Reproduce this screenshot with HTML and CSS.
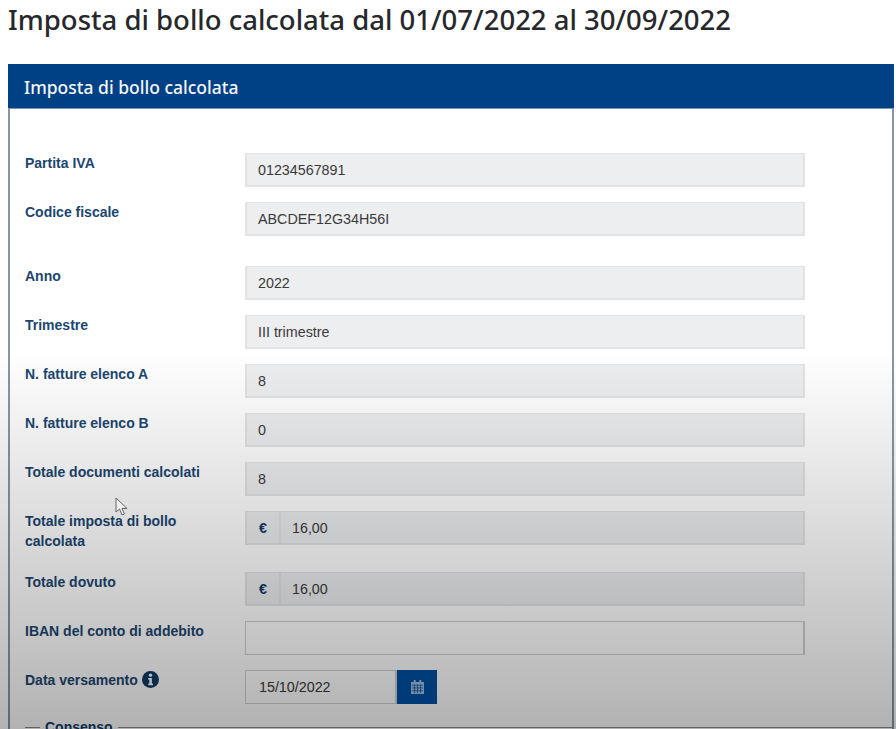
FILE: index.html
```html
<!DOCTYPE html>
<html lang="it">
<head>
    <meta charset="UTF-8">
    <link rel="stylesheet" href="styles.css">
    <title>Imposta di bollo calcolata</title>
</head>
<body>
    <h1 class="page-title">Imposta di bollo calcolata dal 01/07/2022 al 30/09/2022</h1>

    <section class="panel">
        <h2 class="panel-title">Imposta di bollo calcolata</h2>
        <form class="panel-body">
            <div class="row">
                <label class="row-label">Partita IVA</label>
                <div class="field">01234567891</div>
            </div>
            <div class="row row-group-end">
                <label class="row-label">Codice fiscale</label>
                <div class="field">ABCDEF12G34H56I</div>
            </div>
            <div class="row">
                <label class="row-label">Anno</label>
                <div class="field">2022</div>
            </div>
            <div class="row">
                <label class="row-label">Trimestre</label>
                <div class="field">III trimestre</div>
            </div>
            <div class="row">
                <label class="row-label">N. fatture elenco A</label>
                <div class="field">8</div>
            </div>
            <div class="row">
                <label class="row-label">N. fatture elenco B</label>
                <div class="field">0</div>
            </div>
            <div class="row">
                <label class="row-label">Totale documenti calcolati</label>
                <div class="field">8</div>
            </div>
            <div class="row row-tall">
                <label class="row-label">Totale imposta di bollo calcolata</label>
                <div class="field field-money"><span class="addon">€</span><span class="money-value">16,00</span></div>
            </div>
            <div class="row">
                <label class="row-label">Totale dovuto</label>
                <div class="field field-money"><span class="addon">€</span><span class="money-value">16,00</span></div>
            </div>
            <div class="row">
                <label class="row-label">IBAN del conto di addebito</label>
                <div class="field field-empty"></div>
            </div>
            <div class="row">
                <label class="row-label">Data versamento
                    <svg class="info-icon" viewBox="0 0 16 16" width="17" height="17">
                        <circle cx="8" cy="8" r="8" fill="#0f3a66"/>
                        <circle cx="8" cy="3.900" r="1.600" fill="#fff"/>
                        <path d="M5.900 6.600h3.400v5.200h1v1.600H5.900v-1.600h1V8.200h-1z" fill="#fff"/>
                    </svg>
                </label>
                <div class="date-group">
                    <div class="field field-empty date-input">15/10/2022</div>
                    <button type="button" class="date-button">
                        <svg viewBox="0 0 14 15" width="13" height="14">
                            <path d="M3 0h2v2h4V0h2v2h3v13H0V2h3z" fill="#9fc0e2"/>
                            <path d="M1 5.500h12M1 8.500h12M1 11.500h12M3.800 5v9M7 5v9M10.200 5v9" stroke="#0a4f9c" stroke-width="0.800" fill="none"/>
                        </svg>
                    </button>
                </div>
            </div>
            <fieldset class="consent">
                <legend class="consent-title">Consenso</legend>
            </fieldset>
        </form>
    </section>

    <div class="video-shade"></div>
    <svg class="cursor" viewBox="0 0 14 20" width="14" height="20">
        <path d="M1 1v14l3.500-3 2.500 6 2.500-1-2.500-5.500H12z" fill="#fff" fill-opacity="0.5" stroke="#555" stroke-width="0.900"/>
    </svg>
</body>
</html>
```

FILE: styles.css
```css
html, body {
    height: 729px;
    overflow: hidden;
}

body {
    position: relative;
    margin: 0;
    background-color: #fff;
    font-family: "Liberation Sans", Arial, sans-serif;
}

.page-title {
    margin: 0;
    height: 64px;
    padding: 3px 0 0 8px;
    box-sizing: border-box;
    font-family: "Noto Sans", sans-serif;
    font-size: 27.5px;
    line-height: 34px;
    font-weight: 500;
    color: #26282b;
}

.panel {
    margin: 0 2px 0 8px;
    border-left: 2px solid #8597a6;
    border-right: 2px solid #8597a6;
}

.panel-title {
    margin: 0 -2px;
    height: 45px;
    padding-left: 16px;
    box-sizing: border-box;
    background-color: #004085;
    border-bottom: 1px solid #7c98b6;
    font-family: "Noto Sans", sans-serif;
    font-size: 17.5px;
    line-height: 47px;
    font-weight: 500;
    color: #f4f7fa;
}

.panel-body {
    padding: 44px 0 0 15px;
}

.row {
    display: flex;
    margin-bottom: 15px;
}

.row-group-end {
    margin-bottom: 30px;
}

.row-tall {
    height: 46px;
}

.row-label {
    width: 220px;
    flex-shrink: 0;
    padding: 0 30px 0 0;
    box-sizing: border-box;
    font-size: 14px;
    line-height: 20px;
    font-weight: bold;
    color: #1c4670;
}

.field {
    width: 560px;
    height: 34px;
    padding-left: 11px;
    box-sizing: border-box;
    background-color: #edeef0;
    border: 2px solid #e2e3e5;
    border-width: 1px 2px 2px 2px;
    font-size: 14.3px;
    line-height: 32px;
    color: #3a3a3a;
}

.field-empty {
    background-color: transparent;
    border-color: #d0d0d0;
    border-width: 1px 2px 1px 1px;
}

.field-money {
    display: flex;
    padding-left: 0;
}

.addon {
    width: 32px;
    text-align: center;
    border-right: 2px solid #e2e3e5;
    font-weight: bold;
    color: #0f3a66;
}

.money-value {
    padding-left: 11px;
}

.date-group {
    display: flex;
}

.date-input {
    width: 152px;
    padding-left: 13px;
}

.date-button {
    width: 40px;
    height: 34px;
    padding: 0;
    border: 0;
    background-color: #0050a5;
    display: flex;
    align-items: center;
    justify-content: center;
}

.info-icon {
    margin-left: 0;
    vertical-align: -3px;
}

.consent {
    margin: 5px 0 0;
    width: 868px;
    padding: 0;
    box-sizing: border-box;
    border: 0;
    border-top: 1px solid #8a8a8a;
}

.consent-title {
    margin-left: 15px;
    padding: 0 5px;
    font-size: 14px;
    font-weight: bold;
    color: #0f3a66;
}

.video-shade {
    position: absolute;
    left: 0;
    right: 0;
    top: 350px;
    bottom: 0;
    background: linear-gradient(to bottom, rgba(0, 0, 0, 0), rgba(0, 0, 0, 0.3));
    pointer-events: none;
}

.cursor {
    position: absolute;
    left: 115px;
    top: 497px;
}
```
